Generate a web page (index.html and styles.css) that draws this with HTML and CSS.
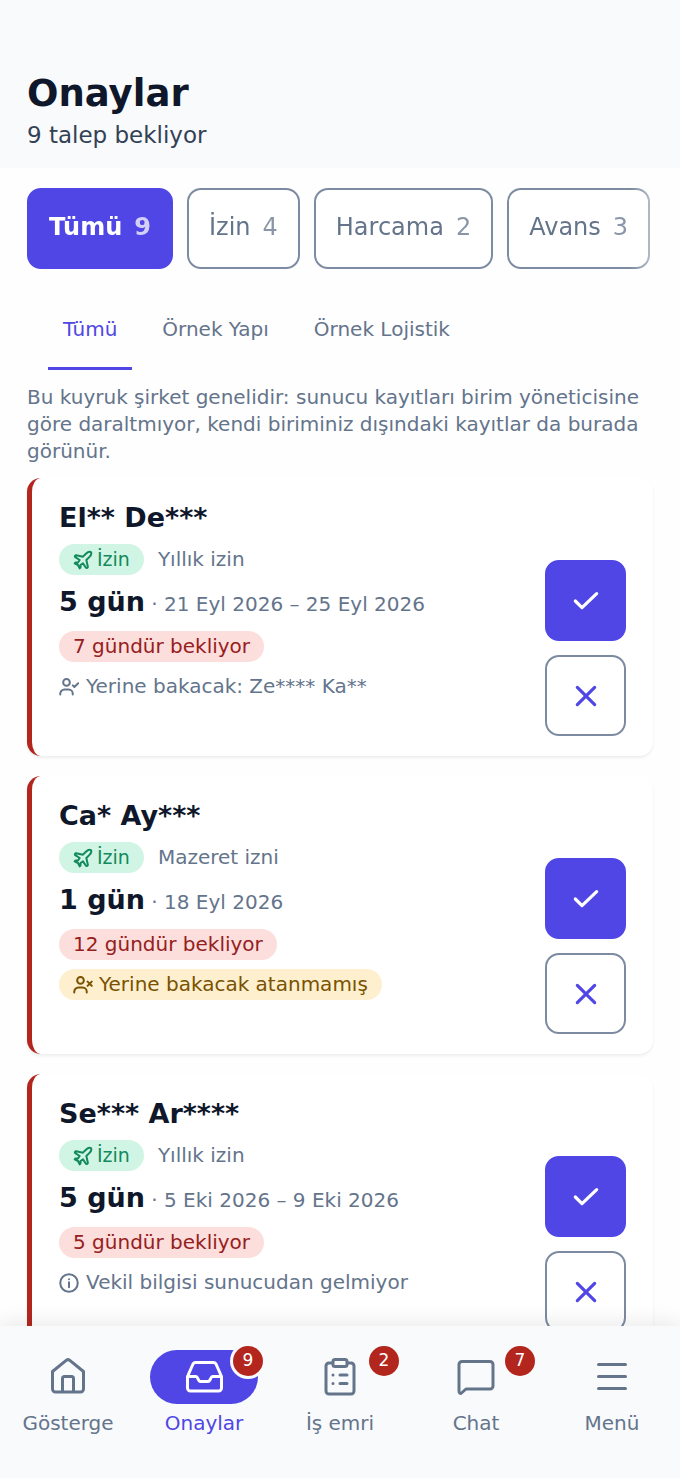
FILE: index.html
```html
<!DOCTYPE html>
<html lang="tr">
<head>
<meta charset="utf-8">
<meta name="viewport" content="width=device-width, initial-scale=1">
<title>Onaylar</title>
<link rel="stylesheet" href="styles.css">
</head>
<body>
<svg class="sprite" aria-hidden="true">
  <symbol id="plane" viewBox="0 0 24 24"><path d="M17.8 20.200 16 12l3.500-3.500C21 7 22.500 4 21.500 2.500c-1.500-1-4.500.5-6 2L12 8 3.800 6.200c-.5-.1-.9.1-1.100.5l-.3.5c-.2.5-.1 1 .3 1.300L8 12l-2 3H3l-1 1 4 2 2 4 1-1v-3l3-2 3.500 5.300c.3.4.8.5 1.300.2l.5-.2c.4-.3.6-.7.5-1.200z"/></symbol>
  <symbol id="user-check" viewBox="0 0 24 24"><circle cx="9" cy="6.500" r="4"/><path d="M1.500 21v-1a5 5 0 0 1 5-5h5a5 5 0 0 1 5 5v1M16.500 10l2 2 4.500-4.500"/></symbol>
  <symbol id="user-x" viewBox="0 0 24 24"><circle cx="9" cy="6.500" r="4"/><path d="M1.500 21v-1a5 5 0 0 1 5-5h5a5 5 0 0 1 5 5v1M17.500 8l5 5M22.500 8l-5 5"/></symbol>
  <symbol id="info" viewBox="0 0 24 24"><circle cx="12" cy="12" r="10.500"/><path d="M12 11v6M12 7.500v.1"/></symbol>
  <symbol id="check" viewBox="0 0 24 24"><path d="M4 12l5 5L20 6.500"/></symbol>
  <symbol id="cross" viewBox="0 0 24 24"><path d="M5.500 5.500l13 13M18.500 5.500l-13 13"/></symbol>
</svg>
<div class="app">
  <header class="header">
    <h1 class="title">Onaylar</h1>
    <p class="subtitle">9 talep bekliyor</p>
  </header>
  <main class="content">
    <div class="chips">
      <button class="chip chip-active" type="button">Tümü <span class="chip-count">9</span></button>
      <button class="chip" type="button">İzin <span class="chip-count">4</span></button>
      <button class="chip" type="button">Harcama <span class="chip-count">2</span></button>
      <button class="chip" type="button">Avans <span class="chip-count">3</span></button>
    </div>
    <div class="tabs" role="tablist">
      <button class="tab tab-active" type="button" role="tab" aria-selected="true">Tümü</button>
      <button class="tab" type="button" role="tab" aria-selected="false">Örnek Yapı</button>
      <button class="tab" type="button" role="tab" aria-selected="false">Örnek Lojistik</button>
    </div>
    <p class="note">Bu kuyruk şirket genelidir: sunucu kayıtları birim yöneticisine göre daraltmıyor, kendi biriminiz dışındaki kayıtlar da burada görünür.</p>
    <div class="cards">
      <article class="card">
        <div class="info">
          <h2 class="name">El** De***</h2>
          <div class="kind"><span class="pill pill-leave"><svg class="icon"><use href="#plane"/></svg>İzin</span><span>Yıllık izin</span></div>
          <p class="period"><strong class="days">5 gün</strong> · 21 Eyl 2026 – 25 Eyl 2026</p>
          <span class="pill pill-wait">7 gündür bekliyor</span>
          <p class="deputy"><svg class="icon"><use href="#user-check"/></svg>Yerine bakacak: Ze**** Ka**</p>
        </div>
        <div class="actions">
          <button class="action action-approve" type="button" aria-label="Onayla"><svg class="action-icon"><use href="#check"/></svg></button>
          <button class="action" type="button" aria-label="Reddet"><svg class="action-icon"><use href="#cross"/></svg></button>
        </div>
      </article>
      <article class="card">
        <div class="info">
          <h2 class="name">Ca* Ay***</h2>
          <div class="kind"><span class="pill pill-leave"><svg class="icon"><use href="#plane"/></svg>İzin</span><span>Mazeret izni</span></div>
          <p class="period"><strong class="days">1 gün</strong> · 18 Eyl 2026</p>
          <span class="pill pill-wait">12 gündür bekliyor</span>
          <span class="pill pill-missing"><svg class="icon"><use href="#user-x"/></svg>Yerine bakacak atanmamış</span>
        </div>
        <div class="actions">
          <button class="action action-approve" type="button" aria-label="Onayla"><svg class="action-icon"><use href="#check"/></svg></button>
          <button class="action" type="button" aria-label="Reddet"><svg class="action-icon"><use href="#cross"/></svg></button>
        </div>
      </article>
      <article class="card">
        <div class="info">
          <h2 class="name">Se*** Ar****</h2>
          <div class="kind"><span class="pill pill-leave"><svg class="icon"><use href="#plane"/></svg>İzin</span><span>Yıllık izin</span></div>
          <p class="period"><strong class="days">5 gün</strong> · 5 Eki 2026 – 9 Eki 2026</p>
          <span class="pill pill-wait">5 gündür bekliyor</span>
          <p class="deputy"><svg class="icon"><use href="#info"/></svg>Vekil bilgisi sunucudan gelmiyor</p>
        </div>
        <div class="actions">
          <button class="action action-approve" type="button" aria-label="Onayla"><svg class="action-icon"><use href="#check"/></svg></button>
          <button class="action" type="button" aria-label="Reddet"><svg class="action-icon"><use href="#cross"/></svg></button>
        </div>
      </article>
    </div>
  </main>
  <nav class="nav">
    <a class="nav-item" href="#gosterge">
      <span class="nav-mark"><svg class="nav-icon" viewBox="0 0 40 40"><path d="M4.500 14.500 18.500 3.200a2.500 2.500 0 0 1 3 0L35.500 14.500V32a3 3 0 0 1-3 3H7.500a3 3 0 0 1-3-3zM14.500 35V21.500a2 2 0 0 1 2-2h7a2 2 0 0 1 2 2V35"/></svg></span>
      Gösterge
    </a>
    <a class="nav-item nav-active" href="#onaylar" aria-current="page">
      <span class="nav-mark"><svg class="nav-icon" viewBox="0 0 40 40"><path d="M3.500 19.500 9 7a3 3 0 0 1 2.700-1.500h17.600A3 3 0 0 1 32 7l5.500 12.500V31a3 3 0 0 1-3 3h-28a3 3 0 0 1-3-3zM3.500 19.500H12c2 0 2 5 4.500 5h7.500c2.500 0 2.500-5 4.500-5h9"/></svg><span class="badge">9</span></span>
      Onaylar
    </a>
    <a class="nav-item" href="#is-emri">
      <span class="nav-mark"><svg class="nav-icon" viewBox="0 0 40 40"><path d="M13 6H9a3 3 0 0 0-3 3v25a3 3 0 0 0 3 3h22a3 3 0 0 0 3-3V9a3 3 0 0 0-3-3h-4M15 2.500h10a2 2 0 0 1 2 2v3a2 2 0 0 1-2 2H15a2 2 0 0 1-2-2v-3a2 2 0 0 1 2-2zM13 18v.1M20 18h7M13 26.500v.1M20 26.500h7"/></svg><span class="badge">2</span></span>
      İş emri
    </a>
    <a class="nav-item" href="#chat">
      <span class="nav-mark"><svg class="nav-icon" viewBox="0 0 40 40"><path d="M3 34V7.500a3 3 0 0 1 3-3h28a3 3 0 0 1 3 3v21.500a3 3 0 0 1-3 3H10l-4.500 4c-1 1-2.500.5-2.500-2z"/></svg><span class="badge">7</span></span>
      Chat
    </a>
    <a class="nav-item" href="#menu">
      <span class="nav-mark"><svg class="nav-icon" viewBox="0 0 40 40"><path d="M6.500 7.500h27M6.500 19.500h27M6.500 31.500h27"/></svg></span>
      Menü
    </a>
  </nav>
</div>
</body>
</html>
```
FILE: styles.css
```css
* { box-sizing: border-box; }
body {
  margin: 0;
  background: #fefefe;
  color: #64748b;
  font: 20px/27px "DejaVu Sans", sans-serif;
}
h1, h2, p { margin: 0; }
button { font: inherit; color: inherit; background: none; border: 0; padding: 0; cursor: pointer; }
svg { fill: none; stroke: currentColor; stroke-width: 2.4; stroke-linecap: round; stroke-linejoin: round; flex: none; }
.sprite { display: none; }

.app { display: flex; flex-direction: column; height: 100vh; }
.header { flex: none; padding: 70px 27px 16px; background: #f9fafc; }
.title { color: #0f172a; font-size: 37px; line-height: 48px; }
.subtitle { color: #334155; font-size: 23px; line-height: 34px; }

.content { flex: 1; min-height: 0; overflow-y: auto; scrollbar-width: none; }
.chips {
  display: flex;
  gap: 14px;
  padding: 20px 27px;
  overflow-x: auto;
  scrollbar-width: none;
  mask-image: linear-gradient(to right, #000 calc(100% - 50px), transparent);
}
.chip {
  display: flex;
  flex: none;
  align-items: center;
  gap: 12px;
  height: 81px;
  padding: 0 20px 2px;
  border: 2px solid #7c8ba1;
  border-radius: 14px;
  background: #fff;
  font-size: 24px;
}
.chip-active { background: #4f46e5; border-color: #4f46e5; color: #fff; font-weight: bold; }
.chip-count { opacity: 0.75; }

.tabs { display: flex; gap: 15px; padding: 0 48px; }
.tab { height: 81px; padding: 2px 15px 0; border-bottom: 3px solid transparent; }
.tab-active { color: #4f46e5; border-color: #4f46e5; }

.note { padding: 14px 27px 13px; }

.cards { display: flex; flex-direction: column; gap: 20px; padding: 0 27px 20px; }
.card {
  display: flex;
  justify-content: space-between;
  gap: 14px;
  padding: 20px 27px;
  border-left: 5px solid #b3261e;
  border-radius: 14px;
  background: #fff;
  box-shadow: 0 2px 3px rgba(15, 23, 42, 0.07);
}
.info { display: flex; flex-direction: column; align-items: flex-start; gap: 9px; }
.name { padding-top: 2px; color: #0f172a; font-size: 27px; line-height: 35px; }
.kind { display: flex; align-items: center; gap: 14px; }
.pill { display: flex; align-items: center; gap: 6px; height: 31px; padding: 0 14px; border-radius: 16px; }
.pill-leave { gap: 4px; background: #d1f5e4; color: #128a5b; font-size: 19px; }
.pill-wait { background: #fcdedd; color: #96201c; }
.pill-missing { background: #feefcf; color: #7a5200; }
.icon { width: 20px; height: 20px; }
.period { line-height: 36px; }
.days { color: #0f172a; font-size: 27px; }
.deputy { display: flex; align-items: center; gap: 7px; height: 31px; }
.actions { display: flex; flex-direction: column; gap: 14px; padding-top: 62px; }
.action {
  display: flex;
  align-items: center;
  justify-content: center;
  width: 81px;
  height: 81px;
  border: 2px solid #7c8ba1;
  border-radius: 14px;
  color: #4f46e5;
}
.action-approve { background: #4f46e5; border-color: #4f46e5; color: #fff; }
.action-icon { width: 32px; height: 32px; }

.nav {
  position: relative;
  display: flex;
  flex: none;
  padding: 24px 0 41px;
  background: #f9fafc;
  box-shadow: 0 -2px 20px rgba(15, 23, 42, 0.1);
}
.nav-item {
  display: flex;
  flex: 1;
  flex-direction: column;
  align-items: center;
  gap: 6px;
  color: inherit;
  text-decoration: none;
}
.nav-mark {
  position: relative;
  display: flex;
  align-items: center;
  justify-content: center;
  width: 108px;
  height: 54px;
  border-radius: 27px;
}
.nav-active { color: #4f46e5; }
.nav-active .nav-mark { background: #4f46e5; color: #fff; }
.nav-icon { width: 40px; height: 40px; stroke-width: 3; }
.badge {
  position: absolute;
  top: -4px;
  right: -5px;
  width: 30px;
  height: 30px;
  border-radius: 50%;
  background: #b3261e;
  box-shadow: 0 0 0 3px #f9fafc;
  color: #fff;
  font-size: 17px;
  line-height: 29px;
  text-align: center;
}
```
